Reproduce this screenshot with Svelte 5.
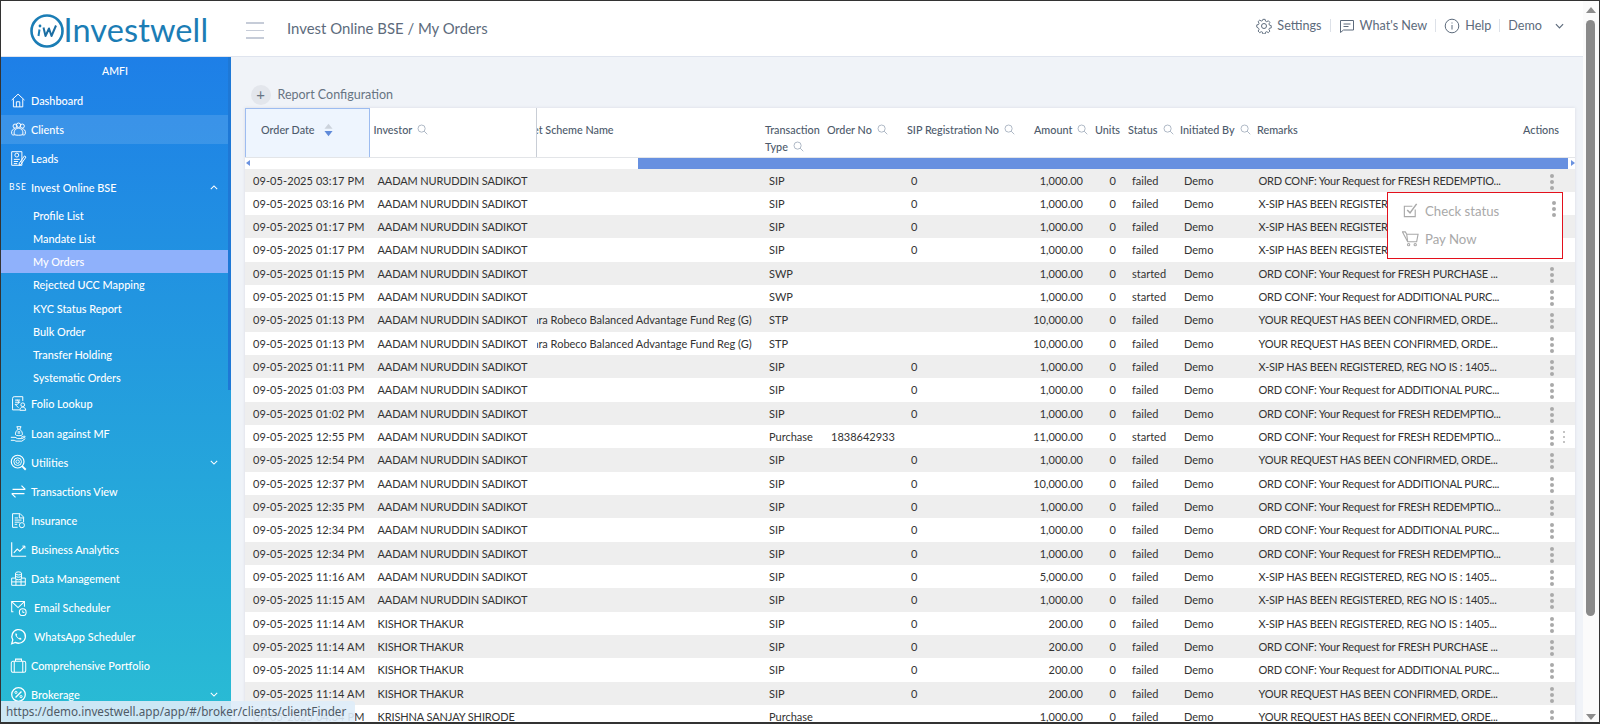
<script>
  const I = {
    home: '<path d="M2 9.500 9.500 2.500 17 9.500"/><path d="M4 8.500V17.500h11V8.500"/><path d="M7.500 17.500v-6h4v6"/>',
    users: '<circle cx="6" cy="6" r="2.400"/><circle cx="10" cy="5" r="2.600"/><circle cx="14.500" cy="6" r="2.400"/><path d="M2 15c-1-4 2-6 4-6M18 15c1-4-2-6-4-6"/><path d="M5 16c-1-6 3-7.500 5-7.500s6 1.500 5 7.500c-2 1-8 1-10 0z"/><path d="M2 15c0 1 1 1.500 3 1.500M18 15c0 1-1 1.500-3 1.500"/>',
    lead: '<path d="M2 2h12v16H2z"/><circle cx="8" cy="6" r="2.300"/><path d="M4.500 11h7M4.500 13.500h5M4.500 16h4"/><path d="M11 15.500 17 7l1.800 1.300-6 8.700-2 .8z"/>',
    folio: '<path d="M3 15.500V4a2 2 0 0 1 2-2h10v5"/><path d="M3 15.500v2h8"/><path d="M6 6h6M6 8.500h6M8 6c3 0 3 5 0 5H6l4 4"/><circle cx="15" cy="11.500" r="2.200"/><path d="M11.500 18c0-5 7-5 7 0z"/>',
    loan: '<path d="M1 14.500h5l3 1.500h5l4-2c-.5-1-1.500-1-2.500-.5l-2.500 1"/><path d="M1 18h4l2 1h7l4-3"/><path d="M8 2h5l-1.500 3h-2zM9.500 5c-2 1.500-3.500 4-3 6.500.5 1.500 7.500 1.500 8 0 .5-2.500-1-5-3-6.500"/><path d="M9 8h3M9 9.500h3"/>',
    util: '<circle cx="9" cy="9" r="7.500" stroke-width="1.400"/><circle cx="9" cy="9" r="4.500"/><circle cx="9" cy="9" r="2"/><path d="m14 14 4.500 4.500" stroke-width="2.200"/>',
    trans: '<path d="M3 7.500h15M13.500 3 18 7.500" stroke-width="1.400"/><path d="M17 12.500H2M6.500 17 2 12.500" stroke-width="1.400"/>',
    ins: '<path d="M3 2h9l4 4v6M3 2v16h6"/><path d="M11 2.500V7h4.500"/><path d="M5.500 7h4M5.500 9.500h8M5.500 12h6M5.500 14.500h3"/><circle cx="14" cy="15.500" r="3"/>',
    chart: '<path d="M2 1.500V18h17" stroke-width="1.300"/><path d="m4.500 14 4-4.500 3 2.500 6-6" stroke-width="1.300"/><path d="M14.500 6h3v3"/>',
    data: '<ellipse cx="10" cy="4" rx="3.500" ry="1.800"/><path d="M6.500 4v6c0 2 7 2 7 0V4M6.500 7c0 2 7 2 7 0"/><path d="M6.500 9.500H2v8.500h16V9.500h-4.500M2 14h16M7 10v8M13 10v8"/>',
    mail: '<path d="M4 15H2V3h15v6" stroke-width="1.200"/><path d="m2 3 7.500 7L17 3" stroke-width="1.200"/><circle cx="15" cy="15.500" r="4" stroke-width="1.200"/><path d="M15 13.500v2.300h2"/>',
    wa: '<path d="M2 18.500 3.300 14a8 8 0 1 1 3 2.900z" stroke-width="1.500"/><path d="M7 6c-1.500 1.500-.5 3.500 1.500 5.500s3.800 3 5.300 1.500l-2-1.700-1 .7c-1-.4-2.500-1.800-3-3l.7-1z" fill="white" stroke="none"/>',
    brief: '<rect x="1.500" y="5" width="17" height="13" rx="2" stroke-width="1.200"/><path d="M5 5v13M15 5v13M6.500 5V2.500h7V5" stroke-width="1.200"/>',
    pct: '<circle cx="10" cy="10" r="8" stroke-width="1.500"/><path d="m6.500 13.500 7-7" stroke-width="1.600"/><circle cx="7" cy="7.500" r="1.300"/><circle cx="13" cy="12.500" r="1.300"/>'
  };

  const top = [
    { t: 'Dashboard', i: 'home' },
    { t: 'Clients', i: 'users', active: true },
    { t: 'Leads', i: 'lead' },
    { t: 'Invest Online BSE', bse: true, open: true }
  ];
  const subs = ['Profile List', 'Mandate List', 'My Orders', 'Rejected UCC Mapping', 'KYC Status Report', 'Bulk Order', 'Transfer Holding', 'Systematic Orders'];
  const rest = [
    { t: 'Folio Lookup', i: 'folio' },
    { t: 'Loan against MF', i: 'loan' },
    { t: 'Utilities', i: 'util', down: true },
    { t: 'Transactions View', i: 'trans' },
    { t: 'Insurance', i: 'ins' },
    { t: 'Business Analytics', i: 'chart' },
    { t: 'Data Management', i: 'data' },
    { t: 'Email Scheduler', i: 'mail', wide: true },
    { t: 'WhatsApp Scheduler', i: 'wa', wide: true },
    { t: 'Comprehensive Portfolio', i: 'brief' },
    { t: 'Brokerage', i: 'pct', down: true }
  ];

  const cols = [
    { t: 'Investor', s: true },
    { t: 'Target Scheme Name', clip: true },
    { t: 'Transaction', t2: 'Type', s: true },
    { t: 'Order No', s: true },
    { t: 'SIP Registration No', s: true },
    { t: 'Amount', s: true },
    { t: 'Units' },
    { t: 'Status', s: true },
    { t: 'Initiated By', s: true },
    { t: 'Remarks' },
    { t: 'Actions' }
  ];

  const FR = 'ORD CONF: Your Request for FRESH REDEMPTIO...';
  const FP = 'ORD CONF: Your Request for FRESH PURCHASE ...';
  const AD = 'ORD CONF: Your Request for ADDITIONAL PURC...';
  const YR = 'YOUR REQUEST HAS BEEN CONFIRMED, ORDE...';
  const XS = 'X-SIP HAS BEEN REGISTERED, REG NO IS : 1405...';
  const AA = 'AADAM NURUDDIN SADIKOT';
  const KT = 'KISHOR THAKUR';
  const CR = 'Canara Robeco Balanced Advantage Fund Reg (G)';
  const r = (time, inv, type, amt, status, rem, extra = {}) => ({
    date: '09-05-2025 ' + time, inv, type, amt, status, rem,
    sip: type === 'SIP' ? '0' : '', scheme: '', order: '', ...extra
  });
  const rows = [
    r('03:17 PM', AA, 'SIP', '1,000.00', 'failed', FR),
    r('03:16 PM', AA, 'SIP', '1,000.00', 'failed', XS),
    r('01:17 PM', AA, 'SIP', '1,000.00', 'failed', XS),
    r('01:17 PM', AA, 'SIP', '1,000.00', 'failed', XS),
    r('01:15 PM', AA, 'SWP', '1,000.00', 'started', FP),
    r('01:15 PM', AA, 'SWP', '1,000.00', 'started', AD),
    r('01:13 PM', AA, 'STP', '10,000.00', 'failed', YR, { scheme: CR }),
    r('01:13 PM', AA, 'STP', '10,000.00', 'failed', YR, { scheme: CR }),
    r('01:11 PM', AA, 'SIP', '1,000.00', 'failed', XS),
    r('01:03 PM', AA, 'SIP', '1,000.00', 'failed', AD),
    r('01:02 PM', AA, 'SIP', '1,000.00', 'failed', FR),
    r('12:55 PM', AA, 'Purchase', '11,000.00', 'started', FR, { order: '1838642933', extra: true }),
    r('12:54 PM', AA, 'SIP', '1,000.00', 'failed', YR),
    r('12:37 PM', AA, 'SIP', '10,000.00', 'failed', AD),
    r('12:35 PM', AA, 'SIP', '1,000.00', 'failed', FR),
    r('12:34 PM', AA, 'SIP', '1,000.00', 'failed', AD),
    r('12:34 PM', AA, 'SIP', '1,000.00', 'failed', FR),
    r('11:16 AM', AA, 'SIP', '5,000.00', 'failed', XS),
    r('11:15 AM', AA, 'SIP', '1,000.00', 'failed', XS),
    r('11:14 AM', KT, 'SIP', '200.00', 'failed', XS),
    r('11:14 AM', KT, 'SIP', '200.00', 'failed', FP),
    r('11:14 AM', KT, 'SIP', '200.00', 'failed', AD),
    r('11:14 AM', KT, 'SIP', '200.00', 'failed', YR),
    r('04:34 PM', 'KRISHNA SANJAY SHIRODE', 'Purchase', '1,000.00', 'failed', YR)
  ];
</script>

{#snippet search()}
  <svg class="search" viewBox="0 0 12 12"><circle cx="5" cy="5" r="3.900"/><path d="m7.800 7.800 3.400 3.400"/></svg>
{/snippet}
{#snippet dots()}
  <span class="dots"><i></i><i></i><i></i></span>
{/snippet}
{#snippet navIcon(name)}
  <svg class="nav-icon" viewBox="0 0 20 20">{@html I[name]}</svg>
{/snippet}
{#snippet chevron(up)}
  <svg class="chev" class:up viewBox="0 0 10 6"><path d="M1 1l4 4 4-4"/></svg>
{/snippet}

<div class="frame">
  <div class="page">
    <header>
      <div class="brand">
        <svg class="logo" viewBox="0 0 36 36">
          <circle cx="18" cy="18" r="15.500" />
          <path class="logo-w" d="M14.500 14.500 16.500 23 20 15.500 22.500 23 27 12.500" />
          <path class="logo-i" d="M10.500 16.500 9.500 23" />
          <circle class="logo-dot" cx="11" cy="13" r="1.400" />
        </svg>
        <span class="wordmark">Investwell</span>
      </div>
      <div class="burger"><i></i><i></i><i></i></div>
      <div class="title">Invest Online BSE / My Orders</div>
      <nav class="tools">
        <svg class="tool-icon" viewBox="0 0 16 16"><circle cx="8" cy="8" r="2.500"/><path d="M6.800 1h2.400l.4 1.900 1.300.6 1.700-1 1.600 1.700-1 1.600.5 1.300 1.900.5v2.400l-1.900.4-.5 1.300 1 1.700-1.700 1.600-1.600-1-1.300.5-.4 1.900H6.800l-.4-1.900-1.300-.5-1.700 1-1.600-1.700 1-1.600-.5-1.300L.4 9.200V6.800l1.900-.4.5-1.300-1-1.700 1.700-1.600 1.600 1 1.300-.5z" transform="translate(.4 .4) scale(.95)"/></svg>
        <span>Settings</span><b></b>
        <svg class="tool-icon" viewBox="0 0 16 16"><path d="M1.500 2.500h13v9.500H4.500l-3 2.500z"/><path d="M4.500 6h7M4.500 8.500h5"/></svg>
        <span>What's New</span><b></b>
        <svg class="tool-icon" viewBox="0 0 16 16"><circle cx="8" cy="8" r="6.800"/><path d="M8 7v4.500M8 4.500v1"/></svg>
        <span>Help</span><b></b>
        <span class="demo">Demo</span>
        <svg class="tool-chev" viewBox="0 0 10 6"><path d="M1 1l4 4 4-4"/></svg>
      </nav>
    </header>

    <div class="body">
      <aside>
        <div class="amfi">AMFI</div>
        {#each top as m}
          <div class="item" class:active={m.active}>
            {#if m.bse}<span class="bse">BSE</span>{:else}{@render navIcon(m.i)}{/if}
            <span>{m.t}</span>
            {#if m.open}{@render chevron(true)}{/if}
          </div>
        {/each}
        <div class="subs">
          {#each subs as s}
            <div class="sub" class:current={s === 'My Orders'}>{s}</div>
          {/each}
        </div>
        {#each rest as m}
          <div class="item" class:wide={m.wide}>
            {@render navIcon(m.i)}
            <span>{m.t}</span>
            {#if m.down}{@render chevron(false)}{/if}
          </div>
        {/each}
        <div class="side-thumb"></div>
      </aside>

      <main>
        <div class="config">
          <span class="plus">+</span>
          <span>Report Configuration</span>
        </div>
        <section class="table">
          <div class="grid head">
            <div class="hc sorted">
              <span>Order Date</span>
              <svg class="sort" viewBox="0 0 10 14"><path d="M5 0l4.500 5.500h-9z" fill="#ccd3dc"/><path d="M5 14l4.500-6h-9z" fill="#5f8ad9"/></svg>
            </div>
            {#each cols as c}
              <div class="hc" class:clip={c.clip}>
                {#if c.clip}
                  <span class="shift">{c.t}</span>
                {:else if c.t2}
                  <span>{c.t}</span><br /><span>{c.t2}</span>{@render search()}
                {:else}
                  <span>{c.t}</span>{#if c.s}{@render search()}{/if}
                {/if}
              </div>
            {/each}
          </div>
          <div class="hscroll">
            <span class="arrow left"></span>
            <span class="thumb"></span>
            <span class="arrow right"></span>
          </div>
          {#each rows as row, n}
            <div class="grid row" class:odd={n % 2 === 0}>
              <div class="date">{row.date}</div>
              <div class="name">{row.inv}</div>
              <div class="clip">{#if row.scheme}<span class="shift">{row.scheme}</span>{/if}</div>
              <div>{row.type}</div>
              <div>{row.order}</div>
              <div>{row.sip}</div>
              <div class="num">{row.amt}</div>
              <div class="num">0</div>
              <div>{row.status}</div>
              <div>Demo</div>
              <div class="rem">{row.rem}</div>
              <div class="act">
                {@render dots()}
                {#if row.extra}<span class="tiny"><i></i><i></i><i></i></span>{/if}
              </div>
            </div>
          {/each}

          <div class="menu">
            <div class="menu-item">
              <svg viewBox="0 0 18 18"><path d="M14 8v7.500H2.500V4.500H11"/><path d="m5.500 8.500 3 3L15.500 2" stroke-width="1.600"/></svg>
              <span>Check status</span>
            </div>
            <div class="menu-item">
              <svg viewBox="0 0 18 18"><path d="M.5 2h3l1.500 2.500H17l-1.500 8H6z"/><path d="M5 4.500l1 8"/><circle cx="7" cy="15.500" r="1.200"/><circle cx="14" cy="15.500" r="1.200"/></svg>
              <span>Pay Now</span>
            </div>
            <span class="menu-dots">{@render dots()}</span>
          </div>
        </section>
      </main>
    </div>
  </div>

  <div class="vscroll">
    <span class="v-up"></span>
    <span class="v-thumb"></span>
    <span class="v-down"></span>
  </div>

  <div class="status">https://demo.investwell.app/app/#/broker/clients/clientFinder</div>
</div>

<style>
  :global(body) { margin: 0; background: #fff; }
  .frame {
    position: relative; box-sizing: border-box; width: 1600px; height: 724px;
    border: 1px solid #333; border-bottom-width: 2px; display: flex; overflow: hidden;
    font-family: Lato, "Noto Sans", sans-serif; color: #333; font-size: 11px;
  }
  .page { width: 1582px; display: flex; flex-direction: column; }

  header {
    height: 55px; flex: none; display: flex; align-items: center;
    background: #fff; border-bottom: 1px solid #dfe4ee;
  }
  .brand { display: flex; align-items: center; width: 240px; padding-left: 28px; box-sizing: border-box; flex: none; margin-top: 5px; }
  .logo { width: 36px; height: 36px; flex: none; fill: none; stroke: #1b7db5; stroke-width: 2.600; }
  .logo-w { stroke-width: 2; stroke-linejoin: round; stroke: #1b6ea3; }
  .logo-i { stroke-width: 2; }
  .logo-dot { fill: #1b7db5; stroke: none; }
  .wordmark { font-size: 32.500px; color: #1b7db5; margin-left: -1.500px; line-height: 36px; letter-spacing: .1px; margin-top: -2px; }
  .burger { width: 18px; display: flex; flex-direction: column; gap: 6px; margin-left: 5px; margin-top: 4px; }
  .burger i { display: block; height: 1.500px; background: #c6ccd8; }
  .title { font-size: 14.900px; color: #5d6b7c; margin-left: 23px; margin-bottom: 2px; }
  .tools { margin-left: auto; margin-bottom: 6px; display: flex; align-items: center; font-size: 12.600px; color: #5d6b7c; padding-right: 19px; }
  .tools b { width: 1px; height: 13px; background: #dde1e8; margin: 0 8px; }
  .tool-icon { width: 16px; height: 16px; fill: none; stroke: #5d6b7c; stroke-width: 1; margin-right: 5px; }
  .tool-chev { width: 9px; height: 6px; fill: none; stroke: #5d6b7c; stroke-width: 1.300; margin-left: 13px; }

  .body { flex: 1; display: flex; min-height: 0; }
  aside {
    position: relative; width: 230px; flex: none; overflow: hidden; color: #fff;
    background: linear-gradient(180deg, #1e7fe7 0%, #29bcd4 100%);
    font-size: 10.900px; font-weight: 500;
  }
  .amfi { height: 28.500px; display: flex; align-items: center; justify-content: center; font-size: 10.500px; padding-right: 2px; }
  .item { height: 29.100px; width: 227px; display: flex; align-items: center; padding-left: 9px; box-sizing: border-box; position: relative; }
  .item.active { background: rgba(255, 255, 255, .12); }
  .nav-icon { width: 17px; height: 17px; flex: none; margin-right: 4px; fill: none; stroke: #fff; stroke-width: 1.150; }
  .item.wide .nav-icon { margin-right: 7px; }
  .bse { width: 17px; margin-left: -1px; margin-right: 5px; font-size: 8.500px; font-weight: 400; letter-spacing: .9px; flex: none; }
  .chev { position: absolute; right: 10px; top: 12px; width: 8px; height: 5px; fill: none; stroke: #fff; stroke-width: 1.300; }
  .chev.up { transform: rotate(180deg); }
  .subs { padding-top: 2px; }
  .sub { height: 23.200px; line-height: 23.200px; padding-left: 32px; width: 231px; box-sizing: border-box; }
  .sub.current { background: #8fb1fb; }
  .side-thumb { position: absolute; right: 0; top: 0; width: 3px; height: 333px; background: #1e78d6; }

  main { flex: 1; min-width: 0; background: #f0f3f8; padding: 0 8px 0 13.500px; overflow: hidden; }
  .config { height: 50.500px; padding-top: 25px; box-sizing: border-box; display: flex; align-items: center; gap: 7px; font-size: 12.500px; color: #677483; margin-left: 6px; }
  .plus { width: 20px; height: 20px; border-radius: 50%; background: #e3e6ec; text-align: center; line-height: 19px; font-size: 15px; flex: none; }

  .table { position: relative; background: #fff; box-shadow: 0 0 3px rgba(120, 130, 150, .2); }
  .grid { display: grid; grid-template-columns: 125px 167.500px 224px 62px 80px 127px 61px 33px 52px 77px 266px 56px; }
  .head { height: 49px; font-size: 10.800px; color: #4d5a6b; font-weight: 500; line-height: 17px; }
  .hc { padding: 13px 0 0 4px; white-space: nowrap; min-width: 0; position: relative; }
  .hc.sorted { background: #eef5fe; padding: 12px 0 0 15.500px; display: flex; align-items: flex-start; gap: 9px; border: 1px solid #9dbcf0; border-bottom: 0; box-sizing: border-box; }
  .hc:nth-child(2) { border-right: 1px solid #c9ced6; }
  .sort { width: 9px; height: 14px; margin-top: 2px; }
  .search { width: 11px; height: 11px; margin-left: 5px; vertical-align: -1.500px; fill: none; stroke: #a7b2c1; stroke-width: 1; }
  .clip { overflow: hidden; white-space: nowrap; }
  .hc.clip .shift { margin-left: -28px; }
  .row .shift { display: inline-block; margin-left: -23px; }

  .hscroll { height: 12px; display: flex; align-items: center; position: relative; background: #fff; border-top: 1px solid #e3e5e8; box-sizing: border-box; }
  .arrow { width: 0; height: 0; border-top: 3.500px solid transparent; border-bottom: 3.500px solid transparent; }
  .arrow.left { border-right: 4px solid #6b93e0; margin-left: 1px; }
  .arrow.right { border-left: 4px solid #6b93e0; margin-left: auto; margin-right: 0; }
  .thumb { position: absolute; left: 393.500px; right: 7px; top: 0; bottom: 0; background: #6790e0; }

  .row { height: 23.330px; line-height: 23.330px; color: #333; font-size: 11px; background: #fff; }
  .row.odd { background: #eee; }
  .row > div { padding-left: 8px; white-space: nowrap; min-width: 0; }
  .row > .date { padding-left: 8.500px; letter-spacing: .08px; }
  .row > .name { letter-spacing: -.12px; }
  .row > .num { padding-left: 0; padding-right: 8px; text-align: right; }
  .row > .clip { padding-left: 0; }
  .row > .rem { padding-left: 5.500px; letter-spacing: -.24px; }
  .row > .act { padding-left: 0; position: relative; }
  .dots { position: absolute; left: 31px; top: 5px; display: flex; flex-direction: column; gap: 2px; }
  .dots i { display: block; width: 4px; height: 4px; border-radius: 50%; background: #a9a9a9; }
  .tiny { position: absolute; left: 43.500px; top: 6px; display: flex; flex-direction: column; gap: 3px; }
  .tiny i { display: block; width: 2px; height: 2px; background: #c4c4c4; }

  .menu { position: absolute; left: 1142.500px; top: 84px; width: 176px; height: 67px; box-sizing: border-box; background: #fff; border: 1.300px solid #e3101c; padding: 4px 0 0 14px; }
  .menu-item { display: flex; align-items: center; gap: 6px; height: 28px; font-size: 13.200px; color: #a9a9a9; }
  .menu-item svg { width: 17px; height: 17px; fill: none; stroke: #a9a9a9; stroke-width: 1.200; }
  .menu-dots { position: absolute; left: 133px; top: 3px; }

  .vscroll { flex: 1; position: relative; background: #fbfbfb; }
  .v-up, .v-down { position: absolute; left: 3px; width: 0; height: 0; border-left: 5px solid transparent; border-right: 5px solid transparent; }
  .v-up { top: 6px; border-bottom: 6px solid #8c8c8c; }
  .v-down { bottom: 2px; border-top: 6px solid #8c8c8c; }
  .v-thumb { position: absolute; left: 3px; width: 9px; top: 19px; height: 596px; border-radius: 5px; background: #8a8a8a; }

  .status {
    position: absolute; left: 0; bottom: 0; width: 354px; height: 21px; line-height: 21px;
    background: rgba(222, 236, 248, .9); color: #4f5a66; font-family: "Noto Sans", sans-serif;
    font-size: 11.700px; padding-left: 5px; box-sizing: border-box; white-space: nowrap; overflow: hidden;
    border-top-right-radius: 3px;
  }
</style>
